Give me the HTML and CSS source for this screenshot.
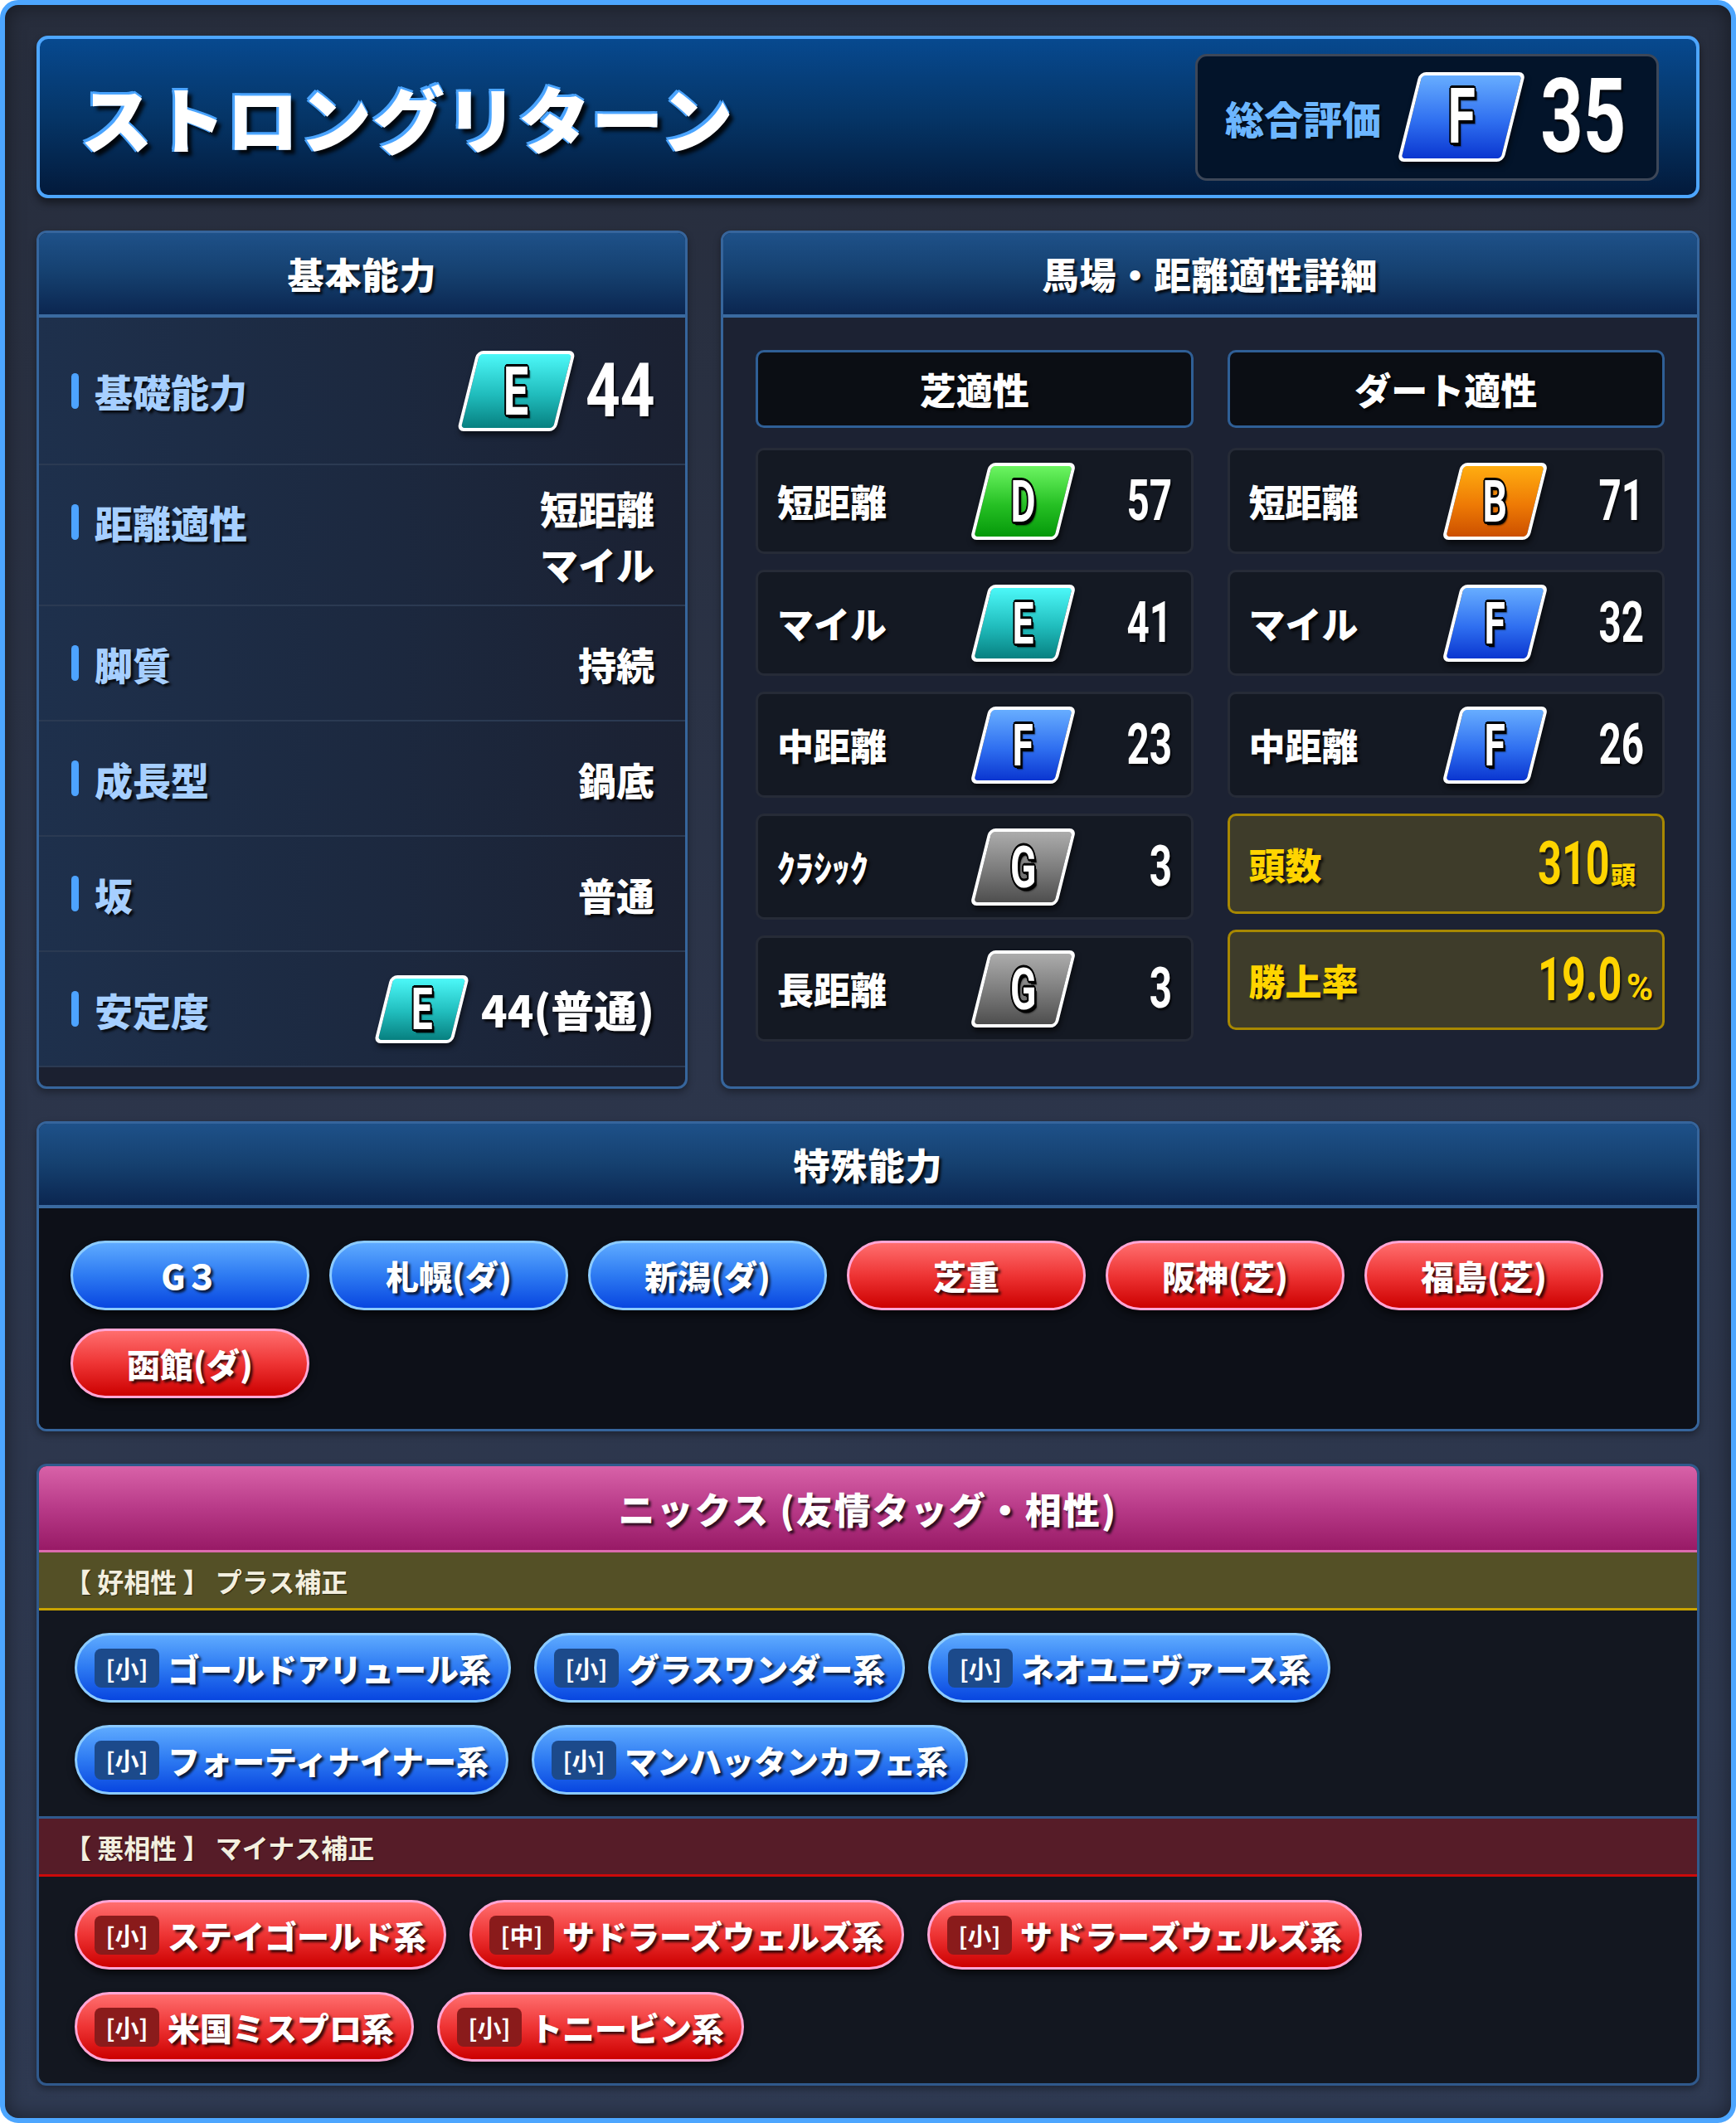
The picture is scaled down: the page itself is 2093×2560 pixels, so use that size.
FILE: index.html
```html
<!DOCTYPE html>
<html lang="ja">
<head>
<meta charset="utf-8">
<title>ストロングリターン</title>
<link rel="stylesheet" href="styles.css">
</head>
<body>
<div class="frame">
  <header class="title-box">
    <h1 class="horse-name">ストロングリターン</h1>
    <div class="overall">
      <span class="overall-label">総合評価</span>
      <span class="rank rank-f rank-xl"><span class="rank-letter">F</span></span>
      <span class="num num-xl">35</span>
    </div>
  </header>

  <div class="stats-row">
    <section class="panel basic-panel">
      <h2 class="panel-head">基本能力</h2>
      <div class="basic-list">
        <div class="brow brow-main">
          <span class="blabel">基礎能力</span>
          <span class="bvalue">
            <span class="rank rank-e rank-lg"><span class="rank-letter">E</span></span>
            <span class="num num-lg">44</span>
          </span>
        </div>
        <div class="brow brow-double">
          <span class="blabel">距離適性</span>
          <span class="bvalue bvalue-lines"><span>短距離</span><span>マイル</span></span>
        </div>
        <div class="brow"><span class="blabel">脚質</span><span class="bvalue">持続</span></div>
        <div class="brow"><span class="blabel">成長型</span><span class="bvalue">鍋底</span></div>
        <div class="brow"><span class="blabel">坂</span><span class="bvalue">普通</span></div>
        <div class="brow">
          <span class="blabel">安定度</span>
          <span class="bvalue">
            <span class="rank rank-e rank-sm"><span class="rank-letter">E</span></span>
            <span class="stab-text">44(普通)</span>
          </span>
        </div>
      </div>
    </section>

    <section class="panel">
      <h2 class="panel-head">馬場・距離適性詳細</h2>
      <div class="apt-body">
        <div class="apt-col">
          <div class="col-head">芝適性</div>
          <div class="apt-cell"><span class="cell-label">短距離</span><span class="rank rank-d rank-md"><span class="rank-letter">D</span></span><span class="cell-num"><span class="num num-md">57</span></span></div>
          <div class="apt-cell"><span class="cell-label">マイル</span><span class="rank rank-e rank-md"><span class="rank-letter">E</span></span><span class="cell-num"><span class="num num-md">41</span></span></div>
          <div class="apt-cell"><span class="cell-label">中距離</span><span class="rank rank-f rank-md"><span class="rank-letter">F</span></span><span class="cell-num"><span class="num num-md">23</span></span></div>
          <div class="apt-cell"><span class="cell-label">ｸﾗｼｯｸ</span><span class="rank rank-g rank-md"><span class="rank-letter">G</span></span><span class="cell-num"><span class="num num-md">3</span></span></div>
          <div class="apt-cell"><span class="cell-label">長距離</span><span class="rank rank-g rank-md"><span class="rank-letter">G</span></span><span class="cell-num"><span class="num num-md">3</span></span></div>
        </div>
        <div class="apt-col">
          <div class="col-head">ダート適性</div>
          <div class="apt-cell"><span class="cell-label">短距離</span><span class="rank rank-b rank-md"><span class="rank-letter">B</span></span><span class="cell-num"><span class="num num-md">71</span></span></div>
          <div class="apt-cell"><span class="cell-label">マイル</span><span class="rank rank-f rank-md"><span class="rank-letter">F</span></span><span class="cell-num"><span class="num num-md">32</span></span></div>
          <div class="apt-cell"><span class="cell-label">中距離</span><span class="rank rank-f rank-md"><span class="rank-letter">F</span></span><span class="cell-num"><span class="num num-md">26</span></span></div>
          <div class="gold-box">
            <span class="gold-label">頭数</span>
            <span class="gold-value"><span class="num num-gold">310</span><span class="gold-unit">頭</span></span>
          </div>
          <div class="gold-box">
            <span class="gold-label">勝上率</span>
            <span class="gold-value"><span class="num num-gold">19.0</span><span class="gold-pct">%</span></span>
          </div>
        </div>
      </div>
    </section>
  </div>

  <section class="panel">
    <h2 class="panel-head">特殊能力</h2>
    <div class="special-body">
      <span class="pill pill-blue">G３</span>
      <span class="pill pill-blue">札幌(ダ)</span>
      <span class="pill pill-blue">新潟(ダ)</span>
      <span class="pill pill-red">芝重</span>
      <span class="pill pill-red">阪神(芝)</span>
      <span class="pill pill-red">福島(芝)</span>
      <span class="pill pill-red">函館(ダ)</span>
    </div>
  </section>

  <section class="panel nicks-panel">
    <h2 class="nicks-head">ニックス (友情タッグ・相性)</h2>
    <div class="sub sub-good">【 好相性 】 プラス補正</div>
    <div class="chips">
      <span class="chip chip-blue"><span class="chip-tag">[小]</span><span class="chip-name">ゴールドアリュール系</span></span>
      <span class="chip chip-blue"><span class="chip-tag">[小]</span><span class="chip-name">グラスワンダー系</span></span>
      <span class="chip chip-blue"><span class="chip-tag">[小]</span><span class="chip-name">ネオユニヴァース系</span></span>
      <span class="chip chip-blue"><span class="chip-tag">[小]</span><span class="chip-name">フォーティナイナー系</span></span>
      <span class="chip chip-blue"><span class="chip-tag">[小]</span><span class="chip-name">マンハッタンカフェ系</span></span>
    </div>
    <div class="sub sub-bad">【 悪相性 】 マイナス補正</div>
    <div class="chips chips-bad">
      <span class="chip chip-red"><span class="chip-tag">[小]</span><span class="chip-name">ステイゴールド系</span></span>
      <span class="chip chip-red"><span class="chip-tag">[中]</span><span class="chip-name">サドラーズウェルズ系</span></span>
      <span class="chip chip-red"><span class="chip-tag">[小]</span><span class="chip-name">サドラーズウェルズ系</span></span>
      <span class="chip chip-red"><span class="chip-tag">[小]</span><span class="chip-name">米国ミスプロ系</span></span>
      <span class="chip chip-red"><span class="chip-tag">[小]</span><span class="chip-name">トニービン系</span></span>
    </div>
  </section>
</div>
</body>
</html>
```

FILE: styles.css
```css
* {
  box-sizing: border-box;
  margin: 0;
  padding: 0;
}

html,
body {
  background: #ffffff;
}

body {
  margin: 0;
  width: 2093px;
  height: 2560px;
  font-family: "Noto Sans CJK JP", "Noto Sans", sans-serif;
  color: #ffffff;
}

.frame {
  width: 2093px;
  height: 2560px;
  border: 6px solid #4da6ff;
  border-radius: 22px;
  background: linear-gradient(180deg, #272d3c 0%, #2c354a 50%, #2f3a52 100%);
  box-shadow: inset 0 0 24px rgba(0, 0, 0, 0.45);
  padding: 37px 38px 39px;
  display: flex;
  flex-direction: column;
  gap: 39px;
}

/* ---------- title ---------- */
.title-box {
  flex: none;
  height: 196px;
  border: 4px solid #4da6ff;
  border-radius: 14px;
  background: linear-gradient(180deg, #07498f 0%, #053567 50%, #031a3b 100%);
  box-shadow: 0 6px 10px rgba(0, 0, 0, 0.45);
  display: flex;
  align-items: center;
  justify-content: space-between;
  padding: 0 45px 0 49px;
}

.horse-name {
  font-size: 87px;
  font-weight: 900;
  letter-spacing: 1px;
  line-height: 1;
  color: #ffffff;
  text-shadow: -3px -3px 0 #4aa4ff, -3px 0 0 #4aa4ff, 0 -3px 0 #4aa4ff,
    5px 5px 4px rgba(0, 0, 0, 0.85);
}

.overall {
  width: 559px;
  height: 153px;
  border: 3px solid #3d4758;
  border-radius: 14px;
  background: #03142a;
  display: flex;
  align-items: center;
  padding-left: 33px;
}

.overall-label {
  font-size: 47px;
  font-weight: 900;
  line-height: 1;
  color: #6cb6ff;
  text-shadow: 2px 2px 2px rgba(0, 0, 0, 0.6);
}

/* ---------- rank badge ---------- */
.rank {
  display: inline-flex;
  align-items: center;
  justify-content: center;
  flex: none;
  border: 4px solid #ffffff;
  border-radius: 8px;
  transform: skewX(-14deg);
  box-shadow: 3px 5px 6px rgba(0, 0, 0, 0.55);
}

.rank-letter {
  display: inline-block;
  font-family: Roboto, "Liberation Sans", sans-serif;
  font-weight: 700;
  line-height: 1;
  color: #ffffff;
  transform: skewX(14deg) scaleX(0.66);
  text-shadow: -2px -2px 0 #000, 2px -2px 0 #000, -2px 2px 0 #000,
    2px 2px 0 #000, 0 3px 0 #000, 3px 0 0 #000, -3px 0 0 #000, 0 -3px 0 #000,
    4px 4px 0 #000, 5px 5px 2px rgba(0, 0, 0, 0.5);
}

.rank-d { background: linear-gradient(180deg, #6cf562 0%, #26c024 55%, #05990a 100%); }
.rank-e { background: linear-gradient(180deg, #4cf8f8 0%, #20bcbc 55%, #078080 100%); }
.rank-f { background: linear-gradient(180deg, #67adff 0%, #2f6ff0 55%, #0a36d0 100%); }
.rank-b { background: linear-gradient(180deg, #ffad10 0%, #ee7a05 55%, #cc5000 100%); }
.rank-g { background: linear-gradient(180deg, #acacac 0%, #7a7a7a 55%, #4e4e4e 100%); }

.rank-xl { width: 128px; height: 108px; margin-left: 33px; }
.rank-xl .rank-letter { font-size: 92px; }
.rank-lg { width: 119px; height: 97px; }
.rank-lg .rank-letter { font-size: 82px; }
.rank-md { width: 105px; height: 93px; justify-self: center; }
.rank-md .rank-letter { font-size: 70px; }
.rank-sm { width: 95px; height: 82px; }
.rank-sm .rank-letter { font-size: 70px; }

/* ---------- numbers ---------- */
.num {
  display: inline-block;
  font-family: Roboto, "Liberation Sans", sans-serif;
  font-weight: 700;
  line-height: 1;
  color: #ffffff;
  transform-origin: right center;
  text-shadow: 3px 3px 2px rgba(0, 0, 0, 0.65);
  white-space: nowrap;
}

.num-xl { font-size: 124px; margin-left: -8px; transform: scaleX(0.725); }
.num-lg { font-size: 91px; margin-left: 3px; transform: scaleX(0.8); }
.num-md { font-size: 68px; transform: scaleX(0.7); }

/* ---------- panels ---------- */
.stats-row {
  flex: none;
  display: grid;
  grid-template-columns: 785px 1fr;
  gap: 40px;
}

.panel {
  flex: none;
  border: 3px solid #36659c;
  border-radius: 12px;
  overflow: hidden;
  background: #1c2233;
  box-shadow: 0 4px 8px rgba(0, 0, 0, 0.35);
}

.basic-panel {
  padding-bottom: 23px;
  background: #1b2030;
}

.panel-head {
  height: 102px;
  border-bottom: 4px solid #3a6aa0;
  background: linear-gradient(180deg, #1e5189 0%, #15406f 50%, #0b2650 100%);
  display: flex;
  align-items: center;
  justify-content: center;
  font-size: 44px;
  font-weight: 900;
  letter-spacing: 1px;
  line-height: 1;
  text-shadow: 3px 3px 3px rgba(0, 0, 0, 0.8);
}

/* basic abilities */
.basic-list {
  display: flex;
  flex-direction: column;
}

.brow {
  height: 139px;
  display: flex;
  align-items: center;
  justify-content: space-between;
  padding: 0 37px 0 39px;
  border-bottom: 2px solid #2b3a52;
  background: linear-gradient(90deg, #1e304c 0%, #1c2940 50%, #1b2132 100%);
}

.brow-main { height: 178px; }
.brow-double { height: 170px; }

.blabel {
  display: flex;
  align-items: center;
  font-size: 46px;
  font-weight: 900;
  line-height: 1;
  color: #a6cfff;
  text-shadow: 3px 3px 3px rgba(0, 0, 0, 0.8);
}

.blabel::before {
  content: "";
  width: 9px;
  height: 43px;
  border-radius: 5px;
  background: #4da3ff;
  margin-right: 19px;
}

.brow-double .blabel {
  margin-bottom: 32px;
}

.bvalue {
  display: flex;
  align-items: center;
  font-size: 46px;
  font-weight: 900;
  line-height: 1;
  color: #ffffff;
  text-shadow: 3px 3px 3px rgba(0, 0, 0, 0.8);
}

.bvalue-lines {
  flex-direction: column;
  align-items: flex-end;
  gap: 21px;
}

.stab-text {
  margin-left: 24px;
  font-size: 52px;
}

/* aptitude */
.apt-body {
  display: grid;
  grid-template-columns: 1fr 1fr;
  gap: 41px;
  padding: 39px 39px 39px;
}

.apt-col {
  display: flex;
  flex-direction: column;
  gap: 19px;
}

.col-head {
  height: 94px;
  margin-bottom: 5px;
  border: 3px solid #2f5f96;
  border-radius: 10px;
  background: #0b0e14;
  display: flex;
  align-items: center;
  justify-content: center;
  font-size: 44px;
  font-weight: 900;
  line-height: 1;
  text-shadow: 3px 3px 3px rgba(0, 0, 0, 0.8);
}

.apt-cell {
  height: 128px;
  display: grid;
  grid-template-columns: 1fr 128px 116px;
  align-items: center;
  padding: 0 22px 0 23px;
  border: 3px solid #262b37;
  border-radius: 10px;
  background: #141923;
}

.cell-label {
  font-size: 44px;
  font-weight: 900;
  line-height: 1;
  text-shadow: 3px 3px 3px rgba(0, 0, 0, 0.8);
  white-space: nowrap;
}

.cell-num {
  justify-self: end;
}

.gold-box {
  height: 121px;
  display: flex;
  align-items: center;
  justify-content: space-between;
  padding: 0 15px 0 23px;
  border: 3px solid #a88800;
  border-radius: 10px;
  background: #3e3c2a;
}

.gold-label {
  font-size: 44px;
  font-weight: 900;
  line-height: 1;
  color: #ffd400;
  text-shadow: 3px 3px 3px rgba(0, 0, 0, 0.7);
}

.gold-value {
  width: 135px;
  display: flex;
  align-items: baseline;
  color: #ffd400;
}

.num-gold {
  font-size: 72px;
  color: #ffd400;
  transform-origin: left center;
  transform: scaleX(0.7);
  margin-right: -39px;
}

.gold-unit {
  font-size: 30px;
  font-weight: 900;
  line-height: 1;
  margin-left: 3px;
  text-shadow: 2px 2px 2px rgba(0, 0, 0, 0.7);
}

.gold-pct {
  font-family: Roboto, "Liberation Sans", sans-serif;
  font-weight: 700;
  font-size: 44px;
  line-height: 1;
  margin-left: 1px;
  text-shadow: 2px 2px 2px rgba(0, 0, 0, 0.7);
}

/* ---------- special abilities ---------- */
.special-body {
  display: flex;
  flex-wrap: wrap;
  gap: 22px 24px;
  padding: 39px 38px 37px;
  background: #0d1018;
}

.pill {
  width: 288px;
  height: 84px;
  border-radius: 42px;
  border: 3px solid;
  display: flex;
  align-items: center;
  justify-content: center;
  font-size: 40px;
  font-weight: 900;
  line-height: 1;
  text-shadow: 3px 3px 3px rgba(0, 0, 0, 0.75);
  box-shadow: 0 5px 8px rgba(0, 0, 0, 0.6);
}

.pill-blue {
  background: linear-gradient(180deg, #5eaaff 0%, #2d7af2 50%, #0846e0 100%);
  border-color: #8ccbff;
}

.pill-red {
  background: linear-gradient(180deg, #ff6e6e 0%, #ee3434 50%, #cc0000 100%);
  border-color: #ffa6d6;
}

/* ---------- nicks ---------- */
.nicks-panel {
  border-color: #30598c;
  background: #131720;
}

.nicks-head {
  height: 104px;
  border-bottom: 3px solid #dc6aae;
  background: linear-gradient(180deg, #d862a8 0%, #b83a88 50%, #981a66 100%);
  display: flex;
  align-items: center;
  justify-content: center;
  font-size: 44px;
  font-weight: 900;
  letter-spacing: 2px;
  line-height: 1;
  text-shadow: 3px 3px 3px rgba(0, 0, 0, 0.75);
}

.sub {
  display: flex;
  align-items: center;
  padding-left: 31px;
  font-size: 32px;
  font-weight: 700;
  line-height: 1;
  color: #f3efdf;
  text-shadow: 1px 1px 1px rgba(0, 0, 0, 0.5);
}

.sub-good {
  height: 70px;
  border-bottom: 3px solid #c9a300;
  background: #545026;
}

.sub-bad {
  height: 73px;
  border-top: 3px solid #30598c;
  border-bottom: 3px solid #cc0a0a;
  background: #561c28;
}

.chips {
  display: flex;
  flex-wrap: wrap;
  gap: 27px 28px;
  padding: 27px 40px 26px 43px;
}

.chips-bad {
  padding-top: 28px;
}

.chip {
  height: 84px;
  border-radius: 42px;
  border: 3px solid;
  display: flex;
  align-items: center;
  padding: 0 21px;
  box-shadow: 0 5px 8px rgba(0, 0, 0, 0.6);
}

.chip-blue {
  background: linear-gradient(180deg, #5eaaff 0%, #2d7af2 50%, #0846e0 100%);
  border-color: #8ccbff;
}

.chip-red {
  background: linear-gradient(180deg, #ff6e6e 0%, #ee3434 50%, #cc0000 100%);
  border-color: #ffa6d6;
}

.chip-tag {
  width: 78px;
  height: 47px;
  margin-right: 10px;
  border-radius: 8px;
  display: flex;
  align-items: center;
  justify-content: center;
  font-size: 29px;
  font-weight: 700;
  line-height: 1;
  color: #ffffff;
}

.chip-blue .chip-tag { background: #1c4a8b; }
.chip-red .chip-tag { background: #8a1b1b; }

.chip-name {
  font-size: 39px;
  font-weight: 900;
  line-height: 1;
  white-space: nowrap;
  text-shadow: 3px 3px 3px rgba(0, 0, 0, 0.75);
}
```
